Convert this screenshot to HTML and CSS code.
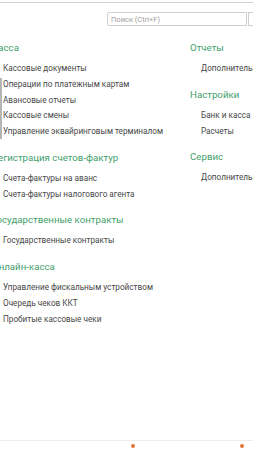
FILE: index.html
```html
<!DOCTYPE html>
<html lang="ru">
<head>
  <meta charset="UTF-8">
  <meta name="viewport" content="width=device-width, initial-scale=1.0">
  <title>Банк и касса</title>
  <link rel="stylesheet" href="styles.css">
</head>
<body>
  <div class="topline"></div>

  <!-- Search -->
  <div class="toolbar">
    <div class="search">
      <input type="text" class="search-input" placeholder="Поиск (Ctrl+F)">
      <button type="button" class="search-btn">▾</button>
    </div>
  </div>

  <!-- Sections -->
  <div class="columns">
    <div class="col col-left">
      <div class="section">
        <h2>Касса</h2>
        <a href="#">Кассовые документы</a>
        <a href="#">Операции по платежным картам</a>
        <a href="#">Авансовые отчеты</a>
        <a href="#">Кассовые смены</a>
        <a href="#">Управление эквайринговым терминалом</a>
      </div>
      <div class="section">
        <h2>Регистрация счетов-фактур</h2>
        <a href="#">Счета-фактуры на аванс</a>
        <a href="#">Счета-фактуры налогового агента</a>
      </div>
      <div class="section">
        <h2>Государственные контракты</h2>
        <a href="#">Государственные контракты</a>
      </div>
      <div class="section">
        <h2>Онлайн-касса</h2>
        <a href="#">Управление фискальным устройством</a>
        <a href="#">Очередь чеков ККТ</a>
        <a href="#">Пробитые кассовые чеки</a>
      </div>
    </div>
    <div class="col col-right">
      <div class="section">
        <h2>Отчеты</h2>
        <a href="#">Дополнительные отчеты</a>
      </div>
      <div class="section">
        <h2>Настройки</h2>
        <a href="#">Банк и касса</a>
        <a href="#">Расчеты</a>
      </div>
      <div class="section">
        <h2>Сервис</h2>
        <a href="#">Дополнительные обработки</a>
      </div>
    </div>
  </div>

  <!-- scroll marker on the left edge -->
  <div class="scroll-mark"></div>

  <div class="bottom">
    <span class="dot"></span>
    <span class="dot"></span>
  </div>
</body>
</html>
```

FILE: styles.css
```css
html, body {
  margin: 0;
  height: 100%;
}
body {
  font-family: Roboto, "Noto Sans", Arial, sans-serif;
  background-color: #fff;
  overflow: hidden;
  display: flex;
  flex-direction: column;
  position: relative;
}
.topline {
  height: 2px;
  border-bottom: 1px solid #d2d0d0;
}
.toolbar {
  display: flex;
  padding: 9px 0 0 107px;
  height: 14px;
}
.search {
  display: flex;
  flex: none;
}
.search-input {
  width: 140px;
  height: 14px;
  box-sizing: border-box;
  border: 1px solid #cfcfcf;
  border-radius: 2px 0 0 2px;
  padding: 0 3px;
  font-family: inherit;
  font-size: 7.5px;
  color: #555;
  outline: none;
}
.search-input::placeholder {
  color: #a0a0a0;
}
.search-btn {
  width: 14px;
  height: 14px;
  margin-left: 1px;
  box-sizing: border-box;
  border: 1px solid #cfcfcf;
  background: #fff;
  color: #aaa;
  font-size: 6px;
  padding: 0;
}
.columns {
  flex: 1;
  display: flex;
  margin-left: -8px;
  padding-top: 14px;
}
.col-left {
  width: 198px;
  flex: none;
}
.col-right {
  flex: none;
  white-space: nowrap;
}
.section {
  margin-bottom: 10px;
}
.section h2 {
  margin: 0 0 5px;
  font-size: 9.7px;
  font-weight: 400;
  line-height: 16px;
  color: #44a06c;
  white-space: nowrap;
}
.section a {
  display: block;
  padding-left: 11px;
  font-size: 8.2px;
  line-height: 15.75px;
  color: #474747;
  text-decoration: none;
  white-space: nowrap;
}
.scroll-mark {
  position: absolute;
  left: 0;
  top: 78px;
  width: 2px;
  height: 61px;
  background-color: #b5b5b5;
}
.bottom {
  height: 9px;
  border-top: 1px solid #ececec;
  display: flex;
  align-items: flex-end;
  padding-left: 131px;
  gap: 105px;
}
.dot {
  width: 4px;
  height: 4px;
  margin-bottom: 2px;
  border-radius: 50%;
  background-color: #e2733a;
}
```
